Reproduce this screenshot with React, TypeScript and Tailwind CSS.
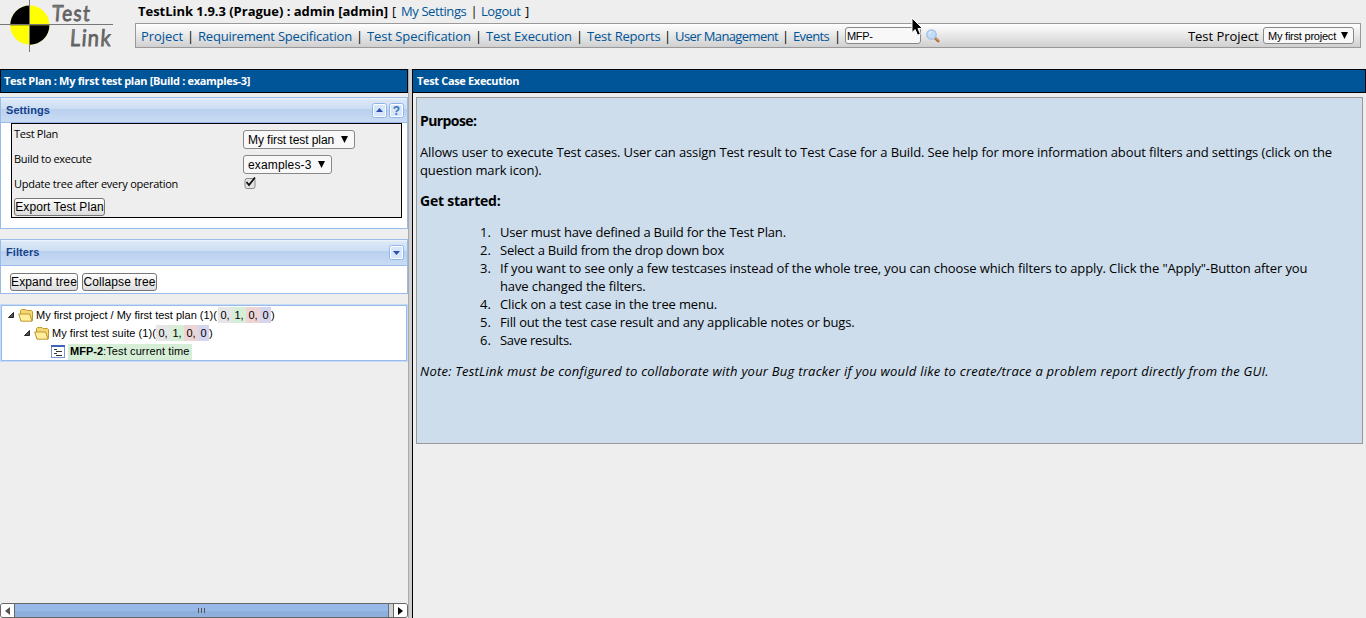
import type { ReactNode } from "react";

const navLinks = [
  { label: "Project", cls: "w-[42px] tracking-[-0.06px]" },
  { label: "Requirement Specification", cls: "w-[154px] tracking-[-0.21px]" },
  { label: "Test Specification", cls: "w-[104px] tracking-[-0.08px]" },
  { label: "Test Execution", cls: "w-[86px] tracking-[-0.14px]" },
  { label: "Test Reports", cls: "w-[73px] tracking-[-0.2px]" },
  { label: "User Management", cls: "w-[103px] tracking-[-0.6px]" },
  { label: "Events", cls: "w-[37px] tracking-[-0.6px]" },
];

const steps = [
  { lines: ["User must have defined a Build for the Test Plan."], cls: "tracking-[-0.19px]" },
  { lines: ["Select a Build from the drop down box"], cls: "tracking-[-0.23px]" },
  {
    lines: [
      'If you want to see only a few testcases instead of the whole tree, you can choose which filters to apply. Click the "Apply"-Button after you',
      "have changed the filters.",
    ],
    cls: "tracking-[-0.118px]",
  },
  { lines: ["Click on a test case in the tree menu."], cls: "tracking-[-0.13px]" },
  { lines: ["Fill out the test case result and any applicable notes or bugs."], cls: "tracking-[-0.16px]" },
  { lines: ["Save results."], cls: "tracking-[-0.3px]" },
];

function Logo() {
  return (
    <svg width="125" height="56" viewBox="0 0 125 56" className="block overflow-visible">
      <defs>
        <linearGradient id="metal" x1="0" y1="0" x2="1" y2="1">
          <stop offset="0" stopColor="#9a9a9a" />
          <stop offset="0.5" stopColor="#5a5a5a" />
          <stop offset="1" stopColor="#8a8a8a" />
        </linearGradient>
      </defs>
      <circle cx="29.8" cy="25.2" r="19.6" fill="#ffff00" />
      <path d="M29.8 25.2H10.2A19.6 19.6 0 0 1 29.8 5.6ZM29.8 25.2H49.4A19.6 19.6 0 0 1 29.8 44.8Z" fill="#000" />
      <path d="M0 24.5H113M29.5 0V52" stroke="#777" fill="none" />
      <g fontFamily="'Lato', sans-serif" fontWeight="400" fill="url(#metal)" stroke="#606060" strokeWidth="0.8">
        <text x="0" y="0" fontSize="22" letterSpacing="1.5" textLength="39" lengthAdjust="spacingAndGlyphs" transform="translate(51.5 21) skewX(-4)">Test</text>
        <text x="0" y="0" fontSize="23" letterSpacing="1.5" textLength="42" lengthAdjust="spacingAndGlyphs" transform="translate(69.5 46) skewX(-4)">Link</text>
      </g>
    </svg>
  );
}

function Magnifier() {
  return (
    <svg width="14" height="14" viewBox="0 0 14 14">
      <path d="M8.8 8.8L12.2 12" stroke="#a8692c" strokeWidth="2.6" strokeLinecap="round" />
      <path d="M9.2 8.6L12.2 11.4" stroke="#e8b878" strokeWidth="1" strokeLinecap="round" />
      <circle cx="5.5" cy="5.5" r="4.7" fill="#c3dcf7" stroke="#a0bfe8" strokeWidth="1.2" />
      <path d="M2.8 5A3 3 0 0 1 5.5 2.6" stroke="#eef6ff" fill="none" />
    </svg>
  );
}

function Pointer() {
  return (
    <svg width="14" height="20" viewBox="0 0 14 20" className="absolute left-[911px] top-[17px]">
      <path d="M1 1V15.5L4.2 12.6L6.6 18.3L9.4 17.1L7 11.6H11.6Z" fill="#000" stroke="#fff" />
    </svg>
  );
}

function Caret() {
  return (
    <svg width="7" height="7" viewBox="0 0 7 7" className="-mt-px">
      <path d="M0 0H7L3.5 7Z" fill="#000" />
    </svg>
  );
}

function Button({ children, className }: { children: ReactNode; className: string }) {
  return (
    <button
      className={
        "flex h-[18px] items-center justify-center whitespace-nowrap rounded-[3px] border border-[#777] bg-linear-to-b from-white to-[#dcdcdc] font-['Liberation_Sans',sans-serif] text-[12px] leading-none text-black " +
        className
      }
    >
      {children}
    </button>
  );
}

function Select({ children, className }: { children: ReactNode; className: string }) {
  return (
    <div
      className={
        "flex items-center justify-between rounded-[3px] border border-[#888] bg-[#f8f8f8] font-['Liberation_Sans',sans-serif] leading-none whitespace-nowrap " +
        className
      }
    >
      <span>{children}</span>
      <Caret />
    </div>
  );
}

function ToolIcon({ kind }: { kind: "up" | "down" | "help" }) {
  return (
    <svg width="15" height="15" viewBox="0 0 15 15">
      <rect x="0.5" y="0.5" width="14" height="14" rx="2" fill="#fff" stroke="#8fb5ec" />
      <rect x="2" y="2" width="11" height="11" fill="#d7e7fb" />
      {kind === "up" && <path d="M4 9H11L7.5 5Z" fill="#2a4fae" />}
      {kind === "down" && <path d="M4 6H11L7.5 10Z" fill="#2a4fae" />}
      {kind === "help" && (
        <text x="7.5" y="12" textAnchor="middle" fontSize="12" fontWeight="700" fontFamily="'Liberation Sans', sans-serif" fill="#3b74b5">
          ?
        </text>
      )}
    </svg>
  );
}

function PanelHeader({ title, className, children }: { title: string; className: string; children: ReactNode }) {
  return (
    <div
      className={
        "flex items-center justify-between border-b border-[#99bbe8] bg-[linear-gradient(#f0f6fd_0,#dae7f6_2px,#cddef3_45%,#b9d0ee_46%,#cadcf4_100%)] pl-[5px] pr-[3px] " +
        className
      }
    >
      <h2 className="font-['Liberation_Sans',sans-serif] text-[11px] font-bold leading-none tracking-[0.08px] text-[#15428b]">{title}</h2>
      <div className="flex gap-[2px]">{children}</div>
    </div>
  );
}

function TitleBar({ children }: { children: ReactNode }) {
  return (
    <h1 className="flex h-6 items-center whitespace-nowrap border border-black bg-[#005498] pb-[2px] text-[11px] font-bold leading-none text-white">
      {children}
    </h1>
  );
}

function Twisty() {
  return (
    <svg width="6" height="6" viewBox="0 0 6 6">
      <path d="M5.5 0.5V5.5H0.5Z" fill="#555" stroke="#222" />
    </svg>
  );
}

function Folder() {
  return (
    <svg width="16" height="14" viewBox="0 0 16 14">
      <path d="M2.5 12.5V2.5L3.5 1.5H8L9 2.5H13.5L14.5 3.5V12.5Z" fill="#f3d775" stroke="#c29a2e" />
      <path d="M0.7 6H11.7L14 13.2H3Z" fill="#ffee9c" stroke="#b98f22" strokeWidth="0.9" />
    </svg>
  );
}

function CaseIcon() {
  return (
    <svg width="14" height="13" viewBox="0 0 14 13">
      <rect x="0.5" y="0.5" width="13" height="12" fill="#fff" stroke="#7a98cf" />
      <rect x="0" y="0" width="14" height="2" fill="#4065b8" />
      <path d="M3 4.5H6M5 6.5H11M3 8.5H6M5 10.5H11" stroke="#333" />
    </svg>
  );
}

function Counts() {
  return (
    <>
      <span className="flex h-[18px] items-center">
        <span className="flex h-4 w-[14px] items-center justify-center bg-[#e6e6e6]">0,</span>
        <span className="flex h-4 w-[14px] items-center justify-center bg-[#d5eed5]">1,</span>
        <span className="flex h-4 w-[14px] items-center justify-center bg-[#eed5d5]">0,</span>
        <span className="flex h-4 w-[11px] items-center justify-center bg-[#d5d5ee]">0</span>
      </span>
      <span>)</span>
    </>
  );
}

export default function App() {
  return (
    <div className="relative flex h-[618px] w-[1366px] flex-col overflow-hidden bg-[#eeeeee] font-['Open_Sans',sans-serif] text-[13px] text-black">
      <header className="flex h-[69px] shrink-0">
        <Logo />
        <div className="flex flex-1 flex-col pl-[10px] pr-[5px]">
          <div className="flex h-[23px] items-center whitespace-pre pl-[3px] leading-none">
            <span className="w-[254px] font-bold tracking-[-0.03px]">TestLink 1.9.3 (Prague) : admin [admin]</span>
            <span className="w-[9px]">[</span>
            <a className="w-[66px] tracking-[-0.4px] text-[#005498]">My Settings</a>
            <span className="w-[14px] text-center">|</span>
            <a className="w-[40px] tracking-[-0.42px] text-[#005498]">Logout</a>
            <span className="pl-1">]</span>
          </div>
          <nav className="flex h-[25px] items-center border border-[#999] bg-linear-to-b from-white to-[#d0d0d0] pl-[5px] pr-[6px] leading-none whitespace-nowrap">
            {navLinks.map((l) => (
              <div key={l.label} className="flex pt-[2px]">
                <a className={"block text-[#005498] " + l.cls}>{l.label}</a>
                <span className="w-[15px] text-center">|</span>
              </div>
            ))}
            <div className="flex h-[17px] w-[76px] items-center rounded-[3px] border border-[#888] bg-[#f8f8f8] pl-px pt-px font-['Liberation_Sans',sans-serif] text-[11px] tracking-[-0.3px]">
              MFP-
            </div>
            <div className="pl-[5px]">
              <Magnifier />
            </div>
            <span className="ml-auto mr-[4px] w-[71px] pt-[2px] tracking-[-0.05px]">Test Project</span>
            <Select className="h-[17px] w-[91px] pl-[4px] pr-[5px] pt-px text-[11px] tracking-[-0.22px]">My first project</Select>
          </nav>
        </div>
      </header>

      <div className="flex min-h-0 flex-1">
        <aside className="flex w-[408px] flex-col">
          <TitleBar>
            <span className="pl-[3px] tracking-[-0.32px]">Test Plan : My first test plan [Build : examples-3]</span>
          </TitleBar>

          <section className="mt-1 h-[132px] border border-[#99bbe8] bg-white">
            <PanelHeader title="Settings" className="h-[25px]">
              <ToolIcon kind="up" />
              <ToolIcon kind="help" />
            </PanelHeader>
            <div className="ml-[10px] flex h-[95px] w-[391px] flex-col border border-black bg-[#eeeeee] pl-[2px] text-[11px] leading-none">
              <div className="flex h-[25px]">
                <span className="w-[229px] pt-1 tracking-[-0.28px]">Test Plan</span>
                <Select className="mt-[6px] h-[19px] w-[112px] pl-[4px] pr-[6px] text-[12px] tracking-[-0.07px]">My first test plan</Select>
              </div>
              <div className="flex h-[25px]">
                <span className="w-[229px] pt-1 tracking-[-0.32px]">Build to execute</span>
                <Select className="mt-[6px] h-[19px] w-[89px] pl-[4px] pr-[6px] text-[12px] tracking-[0.15px]">examples-3</Select>
              </div>
              <div className="flex h-[24px]">
                <span className="w-[229px] pt-1 tracking-[-0.25px]">Update tree after every operation</span>
                <svg width="14" height="14" viewBox="0 0 14 14" className="mt-[2px]">
                  <rect x="2" y="2.5" width="10" height="10" rx="2" fill="#e4e4e4" stroke="#888" />
                  <path d="M3.5 6L6 9L12 1.5" fill="none" stroke="#111" strokeWidth="1.8" />
                </svg>
              </div>
              <Button className="w-[91px] tracking-[0.08px]">Export Test Plan</Button>
            </div>
          </section>

          <section className="mt-[10px] h-[55px] border border-[#99bbe8] bg-white">
            <PanelHeader title="Filters" className="h-[26px]">
              <ToolIcon kind="down" />
            </PanelHeader>
            <div className="flex gap-1 pl-[9px] pt-[7px]">
              <Button className="w-[68px] tracking-[0.1px]">Expand tree</Button>
              <Button className="w-[75px] tracking-[0.1px]">Collapse tree</Button>
            </div>
          </section>

          <section className="mt-[10px] h-[58px] w-[408px] border border-[#c5dbf7]">
            <div className="flex h-full flex-col border border-[#99bbe8] bg-white font-['Liberation_Sans',sans-serif] text-[11px] leading-none whitespace-nowrap">
              <div className="flex h-[18px] items-center pl-[6px]">
                <Twisty />
                <span className="ml-[4px] mr-[2px]">
                  <Folder />
                </span>
                <span className="w-[182px]">My first project / My first test plan (1)(</span>
                <Counts />
              </div>
              <div className="flex h-[18px] items-center pl-[22px]">
                <Twisty />
                <span className="ml-[4px] mr-[2px]">
                  <Folder />
                </span>
                <span className="w-[104px] tracking-[0.05px]">My first test suite (1)(</span>
                <Counts />
              </div>
              <div className="flex h-[18px] items-center pl-[49px] pt-px">
                <CaseIcon />
                <span className="ml-[3px] flex h-4 w-[124px] items-center bg-[#d5eed5] pl-[2px]">
                  <b>MFP-2</b>
                  <span className="tracking-[0.12px]">:Test current time</span>
                </span>
              </div>
            </div>
          </section>

          <div className="mt-auto flex h-[15px] w-[408px] overflow-hidden rounded-[3px] border border-[#666] bg-[#d0d0d0]">
            <span className="flex w-[14px] items-center justify-center border-r border-[#666] bg-white">
              <svg width="5" height="8" viewBox="0 0 5 8">
                <path d="M5 0V8L0 4Z" fill="#555" />
              </svg>
            </span>
            <span className="flex w-[374px] items-center justify-center gap-[2px] border-r border-[#5f6f88] bg-linear-to-b from-[#98b9e8] from-50% to-[#8dafdc] to-55%">
              <i className="h-[5px] w-px bg-[#555]" />
              <i className="h-[5px] w-px bg-[#555]" />
              <i className="h-[5px] w-px bg-[#555]" />
            </span>
            <span className="ml-auto flex w-[14px] items-center justify-center border-l border-[#666] bg-white">
              <svg width="5" height="8" viewBox="0 0 5 8">
                <path d="M0 0V8L5 4Z" fill="#000" />
              </svg>
            </span>
          </div>
        </aside>

        <div className="w-1 border-l border-[#aaa] bg-[#cfcfcf]" />

        <main className="flex min-w-0 flex-1 flex-col border-l border-black">
          <div className="-ml-px">
            <TitleBar>
              <span className="pl-1 tracking-[-0.34px]">Test Case Execution</span>
            </TitleBar>
          </div>
          <article className="ml-[3px] mr-[3px] mt-1 h-[347px] border border-[#999] bg-[#cdddec] pl-[3px] leading-[18px] whitespace-nowrap">
            <h2 className="mt-[14px] text-[14px] font-bold tracking-[-0.6px]">Purpose:</h2>
            <p className="mt-[13px] tracking-[-0.12px]">
              Allows user to execute Test cases. User can assign Test result to Test Case for a Build. See help for more information about filters and settings (click on the
              <br />
              question mark icon).
            </p>
            <h2 className="mt-[13px] text-[14px] font-bold tracking-[-0.23px]">Get started:</h2>
            <ol className="mt-[13px] pl-[60px]">
              {steps.map((s, i) => (
                <li key={i} className="flex">
                  <span className="w-5">{i + 1}.</span>
                  <div className={s.cls}>
                    {s.lines.map((line) => (
                      <p key={line}>{line}</p>
                    ))}
                  </div>
                </li>
              ))}
            </ol>
            <p className="mt-[13px] italic tracking-[0.23px]">
              Note: TestLink must be configured to collaborate with your Bug tracker if you would like to create/trace a problem report directly from the GUI.
            </p>
          </article>
        </main>
      </div>
      <Pointer />
    </div>
  );
}
